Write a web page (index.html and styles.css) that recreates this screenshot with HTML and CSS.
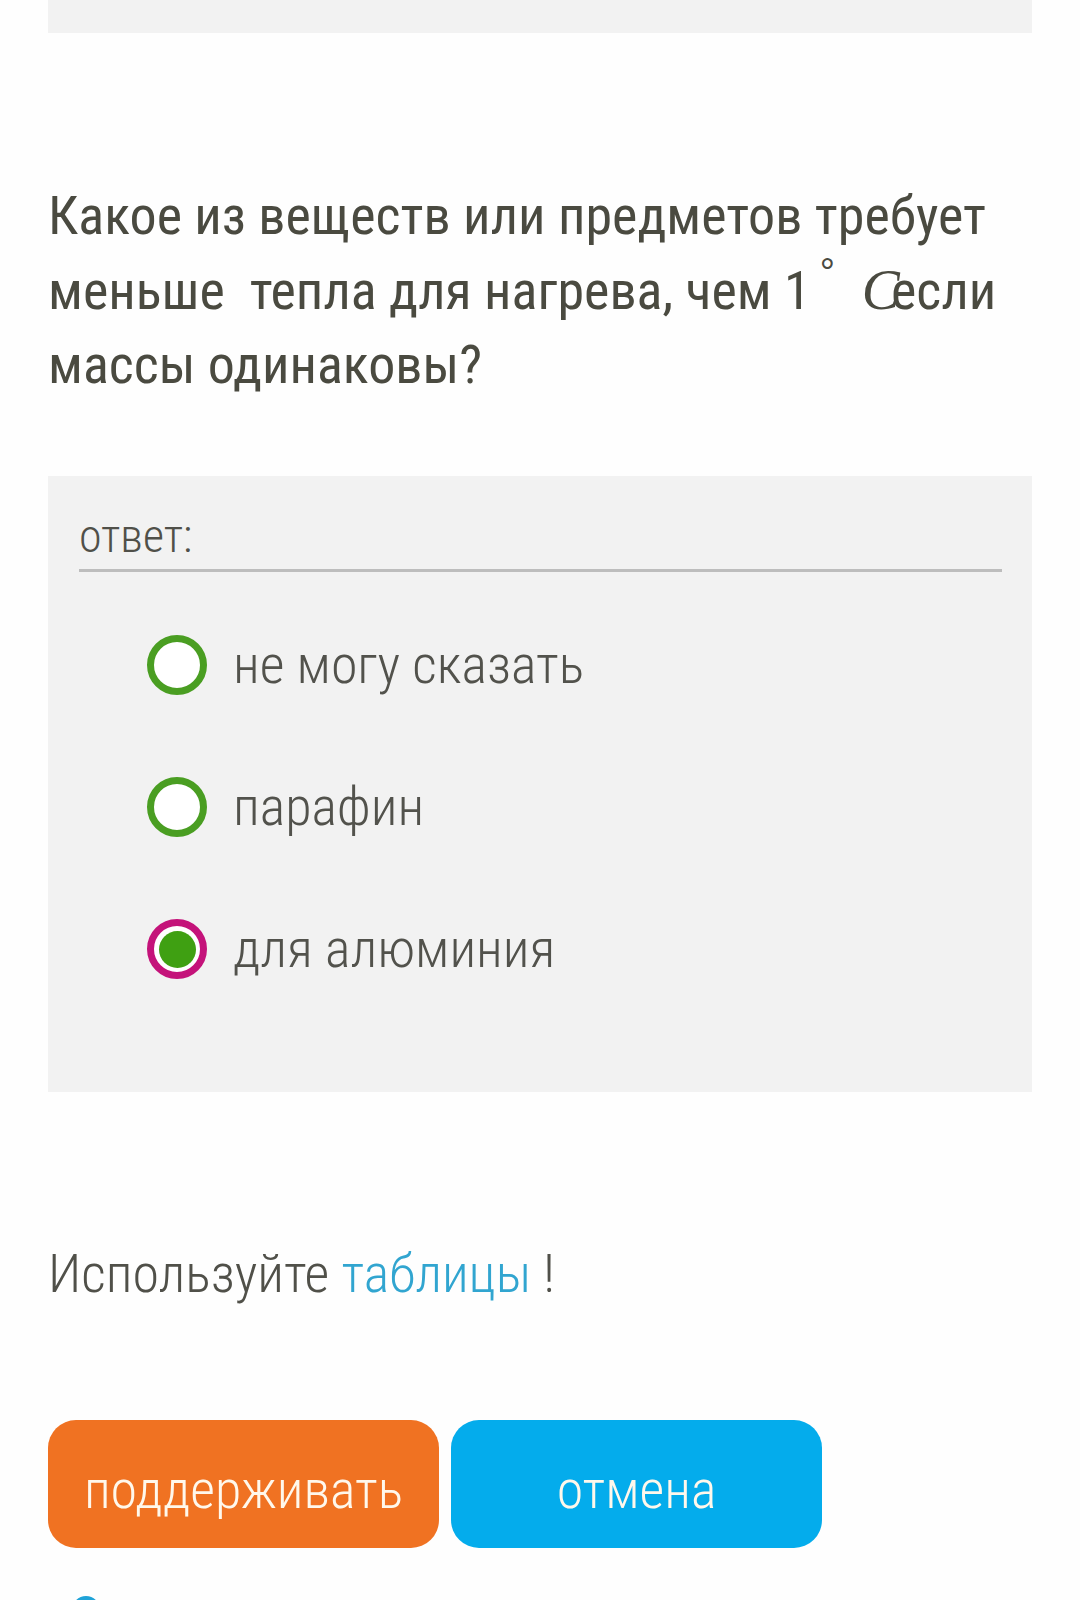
FILE: index.html
```html
<!DOCTYPE html>
<html lang="ru">
<head>
<meta charset="utf-8">
<title>Вопрос</title>
<link rel="stylesheet" href="styles.css">
</head>
<body>
<div class="page">
  <div class="topbar"></div>

  <p class="question">Какое из веществ или предметов требует меньше&nbsp; тепла для нагрева, чем 1<span class="deg">°</span><span class="mathc">C</span>если массы одинаковы?</p>

  <div class="panel">
    <div class="label">ответ:</div>
    <ul class="options">
      <li class="option"><span class="radio"></span><span class="opt-text">не могу сказать</span></li>
      <li class="option"><span class="radio"></span><span class="opt-text">парафин</span></li>
      <li class="option"><span class="radio checked"><span class="dot"></span></span><span class="opt-text">для алюминия</span></li>
    </ul>
  </div>

  <p class="hint">Используйте <span class="link">таблицы</span> !</p>

  <div class="buttons">
    <div class="btn btn-orange">поддерживать</div>
    <div class="btn btn-blue">отмена</div>
  </div>

  <div class="bottom-icon"></div>
</div>
</body>
</html>
```

FILE: styles.css
```css
html, body {
  margin: 0;
  padding: 0;
  background: #fefefe;
}

body {
  width: 1080px;
  height: 1600px;
  overflow: hidden;
  font-family: "Roboto Condensed", "Liberation Sans Narrow", "DejaVu Sans Condensed", Roboto, sans-serif;
  color: #55554f;
}

.page {
  padding: 0 48px;
}

.topbar {
  height: 33px;
  background: #f2f2f2;
}

.question {
  margin: 146px 0 0;
  font-size: 54px;
  font-weight: 400;
  line-height: 74px;
  color: #4a4a40;
}

.deg {
  font-family: "Liberation Sans", sans-serif;
  font-weight: 300;
  font-size: 38px;
  vertical-align: 24px;
  line-height: 0;
  margin: 0 27px 0 9px;
}

.mathc {
  font-family: "Liberation Serif", serif;
  font-style: italic;
  font-weight: 400;
  font-size: 57px;
  margin-right: -9px;
}

.panel {
  margin-top: 74px;
  height: 616px;
  box-sizing: border-box;
  background: #f2f2f2;
  padding: 32px 30px 0 31px;
}

.label {
  font-size: 46px;
  font-weight: 300;
  line-height: 56px;
  padding-bottom: 5px;
  border-bottom: 3px solid #bdbdbd;
  color: #505049;
}

.options {
  list-style: none;
  margin: 63px 0 0;
  padding: 0 0 0 68px;
  display: flex;
  flex-direction: column;
  gap: 82px;
}

.option {
  display: flex;
  align-items: center;
  height: 60px;
  gap: 26px;
}

.radio {
  flex: none;
  width: 60px;
  height: 60px;
  box-sizing: border-box;
  border-radius: 50%;
  border: 7px solid #4a9e22;
  background: #fff;
  display: flex;
  align-items: center;
  justify-content: center;
}

.radio.checked {
  border-color: #c4137a;
}

.dot {
  width: 37px;
  height: 37px;
  border-radius: 50%;
  background: #3fa012;
}

.opt-text {
  font-size: 54px;
  font-weight: 300;
  line-height: 60px;
  color: #52524c;
}

.hint {
  margin: 150px 0 0;
  font-size: 54px;
  font-weight: 300;
  line-height: 64px;
  color: #505049;
}

.link {
  color: #31a5d0;
}

.buttons {
  margin-top: 114px;
  display: flex;
  gap: 12px;
}

.btn {
  height: 128px;
  box-sizing: border-box;
  padding-top: 10px;
  border-radius: 28px;
  display: flex;
  align-items: center;
  justify-content: center;
  font-size: 54px;
  font-weight: 300;
  color: #fff8ec;
}

.btn-orange {
  width: 391px;
  background: #f07222;
}

.btn-blue {
  width: 371px;
  background: #04acec;
}

.bottom-icon {
  margin: 48px 0 0 24px;
  width: 28px;
  height: 28px;
  border-radius: 50%;
  background: #1fa3d8;
}
```
